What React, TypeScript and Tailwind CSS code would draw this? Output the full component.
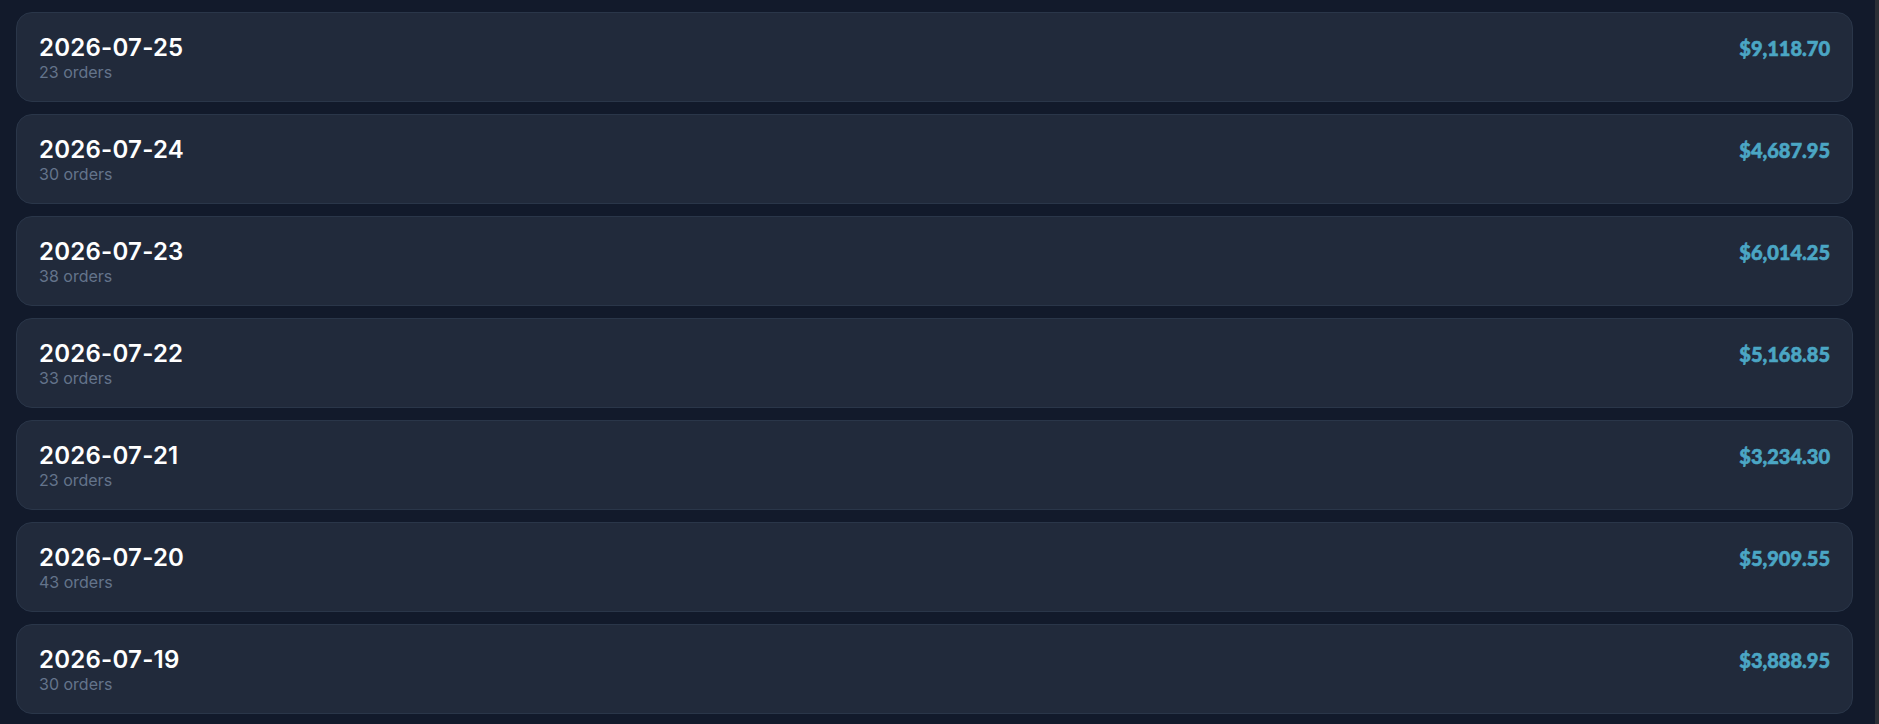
const days = [
  { date: "2026-07-25", orders: 23, total: "$9,118.70" },
  { date: "2026-07-24", orders: 30, total: "$4,687.95" },
  { date: "2026-07-23", orders: 38, total: "$6,014.25" },
  { date: "2026-07-22", orders: 33, total: "$5,168.85" },
  { date: "2026-07-21", orders: 23, total: "$3,234.30" },
  { date: "2026-07-20", orders: 43, total: "$5,909.55" },
  { date: "2026-07-19", orders: 30, total: "$3,888.95" },
];

export default function App() {
  return (
    <div className="flex h-[724px] bg-[#121a2b]">
      <main className="flex-1 overflow-hidden pl-4 pr-[22px] pt-3">
        <div className="flex flex-col gap-3">
          {days.map((d) => (
            <div
              key={d.date}
              className="flex h-[90px] items-start justify-between rounded-2xl border border-[#2a3649] bg-[#212a3b] px-[22px] pt-[21px]"
            >
              <div className="flex flex-col">
                <span className="font-['Inter',sans-serif] text-[24px] font-semibold leading-7 tracking-[0.01em] text-white">
                  {d.date}
                </span>
                <span className="font-['Inter',sans-serif] text-[16px] leading-5 text-[#64748b]">
                  {d.orders} orders
                </span>
              </div>
              <span className="font-['Lato',sans-serif] text-[20px] font-black leading-7 text-[#4ba6c4] [-webkit-text-stroke:0.6px_#4ba6c4]">
                {d.total}
              </span>
            </div>
          ))}
        </div>
      </main>
      <div className="w-1 bg-[#2b2f36]" />
    </div>
  );
}
